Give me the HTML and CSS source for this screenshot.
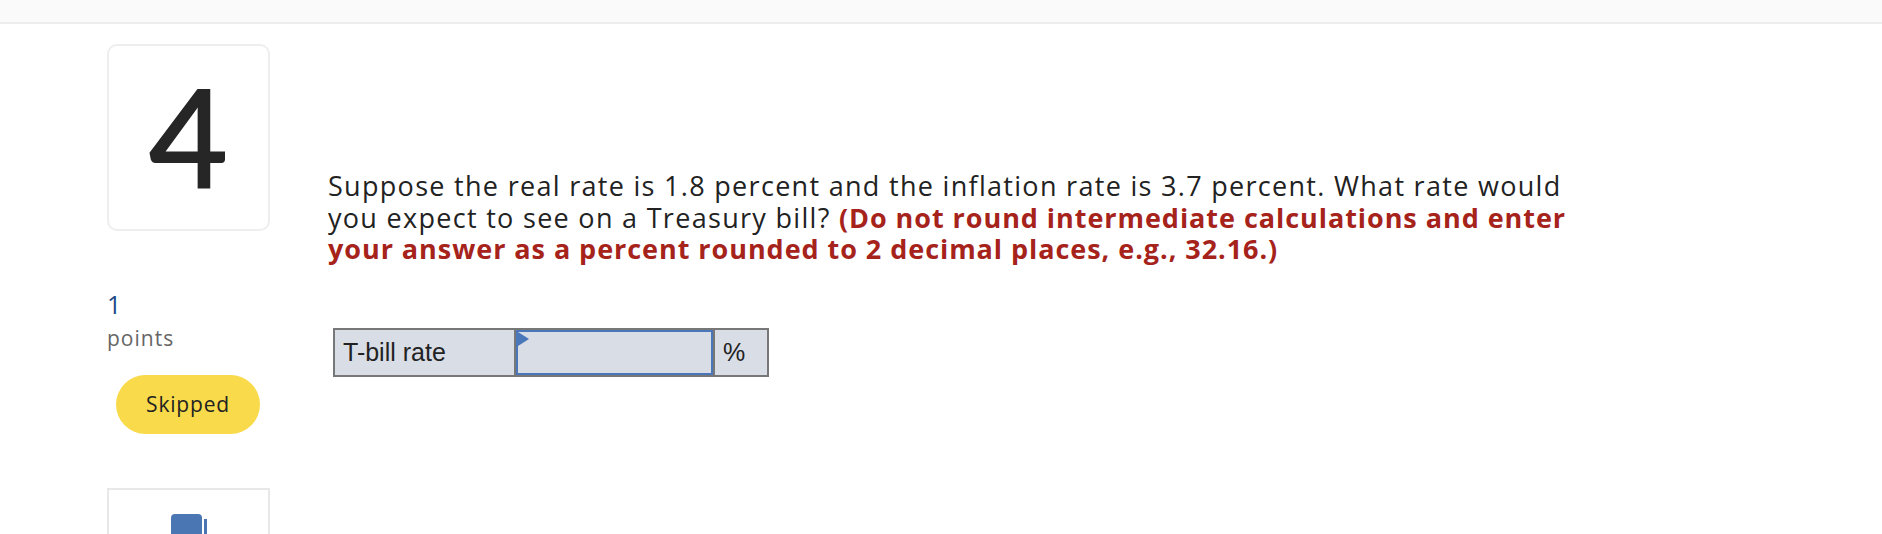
FILE: index.html
```html
<!DOCTYPE html>
<html lang="en">
	<head>
		<title>Question 4</title>
		<meta http-equiv="Content-Type" content="text/html; charset=utf-8">
		<link rel="stylesheet" href="styles.css">
	</head>
	<body>
		<div class="topbar"></div>
		<div class="question">
			<div class="side">
				<div class="qnum">4</div>
				<div class="points">
					<span class="points-val">1</span>
					<span class="points-label">points</span>
				</div>
				<span class="status">Skipped</span>
				<div class="tool">
					<svg width="40" height="40" viewBox="0 0 40 40">
						<rect x="0" y="0" width="31" height="40" rx="4" fill="#4a77b4"/>
						<rect x="33" y="5" width="3" height="35" fill="#4a77b4"/>
					</svg>
				</div>
			</div>
			<div class="content">
				<p class="prompt">Suppose the real rate is 1.8 percent and the inflation rate is 3.7 percent. What rate would you expect to see on a Treasury bill? <strong>(Do not round intermediate calculations and enter your answer as a percent rounded to 2 decimal places, e.g., 32.16.)</strong></p>
				<table class="answer">
					<tr>
						<td class="label">T-bill rate</td>
						<td class="field"><span class="flag"></span></td>
						<td class="unit">%</td>
					</tr>
				</table>
			</div>
		</div>
	</body>
</html>
```

FILE: styles.css
```css
body {
	margin: 0;
	height: 534px;
	overflow: hidden;
	font-family: 'Open Sans', Lato, sans-serif;
	color: #222;
	background: #fff;
}
.topbar {
	height: 22px;
	background-color: #fafafa;
	border-bottom: 2px solid #ececec;
}
.question {
	display: flex;
	gap: 58px;
	padding-left: 107px;
}
.side {
	width: 163px;
	flex-shrink: 0;
	padding-top: 20px;
}
.qnum {
	box-sizing: border-box;
	height: 187px;
	border: 2px solid #eee;
	border-radius: 10px;
	display: flex;
	align-items: center;
	justify-content: center;
	font-family: Lato, sans-serif;
	font-size: 136px;
	font-weight: 400;
	color: #262626;
	-webkit-text-stroke: 2px #262626;
	line-height: 1;
	padding-bottom: 4px;
}
.points {
	display: flex;
	flex-direction: column;
	margin-top: 56px;
	font-size: 21px;
	line-height: 34px;
	letter-spacing: 1px;
}
.points-val {
	color: #1d4a88;
	font-size: 25px;
}
.points-label {
	color: #666;
}
.status {
	display: inline-block;
	margin: 20px 0 0 9px;
	width: 144px;
	height: 59px;
	line-height: 59px;
	border-radius: 30px;
	background-color: #f8da4a;
	text-align: center;
	font-size: 21px;
	letter-spacing: 0.8px;
	color: #222;
}
.tool {
	box-sizing: border-box;
	margin-top: 54px;
	height: 120px;
	border: 2px solid #e8e8e8;
	padding: 24px 0 0 62px;
}
.tool svg {
	display: block;
}
.content {
	width: 1262px;
	padding-top: 146px;
}
.prompt {
	margin: 0;
	font-size: 27px;
	line-height: 31.5px;
	letter-spacing: 1.3px;
	color: #222;
}
.prompt strong {
	color: #a6231b;
	font-weight: 700;
	letter-spacing: 0.95px;
}
.answer {
	margin: 63px 0 0 5px;
	border-collapse: collapse;
	border: 2px solid #777;
	font-family: 'Liberation Sans', Arial, sans-serif;
	font-size: 25px;
	color: #222;
}
.answer td {
	background-color: #d9dde6;
	border: 2px solid #777;
	height: 45px;
	padding: 0 8px;
}
.answer .label {
	width: 163px;
}
.answer .field {
	width: 197px;
	padding: 0;
	position: relative;
	box-shadow: inset 0 0 0 2px #4a77b9;
}
.flag {
	position: absolute;
	left: 2px;
	top: 2px;
	border-top: 7px solid transparent;
	border-bottom: 7px solid transparent;
	border-left: 11px solid #4a77b9;
}
.answer .unit {
	width: 36px;
}
```
